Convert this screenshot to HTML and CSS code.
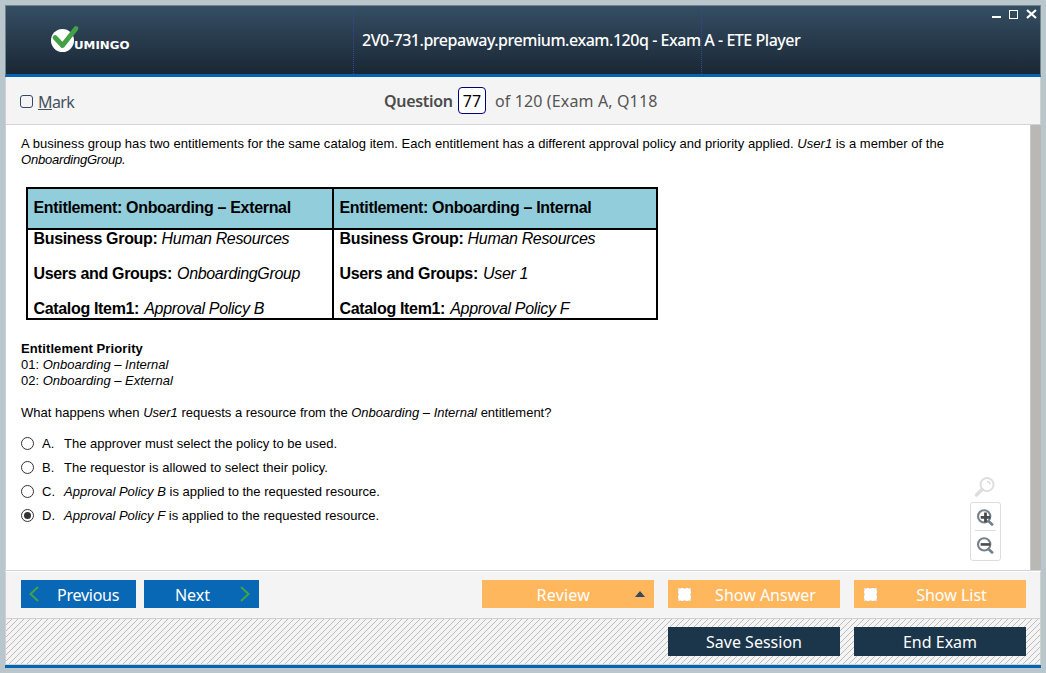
FILE: index.html
```
<!DOCTYPE html>
<html lang="en">
<head>
<meta charset="utf-8">
<title>ETE Player</title>
<link rel="stylesheet" href="styles.css">
</head>
<body>
<div class="window">
  <header class="titlebar">
    <svg class="logo" width="82" height="28" viewBox="0 0 82 28">
      <circle cx="11.500" cy="15.500" r="11.500" fill="#fff"/>
      <path d="M4 12.500L11.500 20.500L25 3.500" fill="none" stroke="#43a047" stroke-width="4.800" stroke-linecap="round" stroke-linejoin="round"/>
      <text class="logo-text" x="23" y="24" textLength="55.500" lengthAdjust="spacingAndGlyphs">UMINGO</text>
    </svg>
    <h1 class="title"><span class="t-title">2V0-731.prepaway.premium.exam.120q - Exam A - ETE Player</span></h1>
    <div class="controls">
      <svg width="46" height="12" viewBox="0 0 46 12" fill="none" stroke="#fff">
        <path d="M0 8H9" stroke-width="2"/>
        <rect x="17.500" y="1.500" width="8" height="8"/>
        <path d="M35 1L44 9M44 1L35 9" stroke-width="2.200"/>
      </svg>
    </div>
  </header>
  <section class="question-bar">
    <label class="mark"><span class="checkbox"></span><span class="t-mark"><u>M</u>ark</span></label>
    <div class="counter"><b class="t-question">Question</b><span class="number">77</span><span class="t-of">of 120 (Exam A, Q118</span></div>
  </section>
  <main class="content">
    <div class="page">
      <p class="intro">A business group has two entitlements for the same catalog item. Each entitlement has a different approval policy and priority applied. <i>User1</i> is a member of the</p>
      <p class="group"><i>OnboardingGroup.</i></p>
      <div class="table">
        <div class="head"><b>Entitlement: Onboarding – External</b></div>
        <div class="head"><b>Entitlement: Onboarding – Internal</b></div>
        <div class="cell">
          <p><b>Business Group:</b> <i>Human Resources</i></p>
          <p><b>Users and Groups:</b> <i>OnboardingGroup</i></p>
          <p><b>Catalog Item1:</b> <i>Approval Policy B</i></p>
        </div>
        <div class="cell">
          <p><b>Business Group:</b> <i>Human Resources</i></p>
          <p><b>Users and Groups:</b> <i>User 1</i></p>
          <p><b>Catalog Item1:</b> <i>Approval Policy F</i></p>
        </div>
      </div>
      <p class="priority"><b>Entitlement Priority</b></p>
      <p>01: <i>Onboarding – Internal</i></p>
      <p>02: <i>Onboarding – External</i></p>
      <p class="ask">What happens when <i>User1</i> requests a resource from the <i>Onboarding – Internal</i> entitlement?</p>
      <ul class="answers">
        <li><span class="radio"></span><span class="letter">A.</span><span>The approver must select the policy to be used.</span></li>
        <li><span class="radio"></span><span class="letter">B.</span><span class="wide">The requestor is allowed to select their policy.</span></li>
        <li><span class="radio"></span><span class="letter">C.</span><span><i>Approval Policy B</i> is applied to the requested resource.</span></li>
        <li><span class="radio checked"></span><span class="letter">D.</span><span><i>Approval Policy F</i> is applied to the requested resource.</span></li>
      </ul>
    </div>
    <div class="zoom-tools">
      <svg width="22" height="22" viewBox="0 0 22 22" fill="none" stroke="#dedede">
        <circle cx="13" cy="8.500" r="6.500" stroke-width="2"/>
        <path d="M8 13.500L2.500 19" stroke-width="3.500" stroke-linecap="round"/>
        <path d="M13 5.500Q16 5.500 16 8.500" stroke-width="1.500"/>
      </svg>
      <div class="zoom-box">
        <svg width="21" height="20" viewBox="0 0 21 20" fill="none" stroke="#74818b">
          <circle cx="9" cy="8.500" r="7" stroke-width="2.400"/>
          <path d="M13.500 13.500L19 18.500" stroke-width="3"/>
          <path d="M5 9.500H16M10.500 4V15" stroke="#4c4c4c" stroke-width="3.200"/>
        </svg>
        <svg class="minus" width="21" height="20" viewBox="0 0 21 20" fill="none" stroke="#74818b">
          <circle cx="9" cy="8.500" r="7" stroke-width="2.400"/>
          <path d="M13.500 13.500L19 18.500" stroke-width="3"/>
          <path d="M5 8.500H16" stroke="#4c4c4c" stroke-width="3"/>
        </svg>
      </div>
    </div>
    <div class="scrollbar"></div>
  </main>
  <nav class="nav-bar">
    <div class="btn blue prev"><svg width="10" height="16" viewBox="0 0 10 16"><path d="M9 1L1.500 8L9 15" fill="none" stroke="#3fa34a" stroke-width="2"/></svg><span class="t-btn">Previous</span></div>
    <div class="btn blue next"><span class="t-btn">Next</span><svg width="10" height="16" viewBox="0 0 10 16"><path d="M1 1L8.500 8L1 15" fill="none" stroke="#3fa34a" stroke-width="2"/></svg></div>
    <div class="btn orange review"><span class="t-btn">Review</span><svg class="arrow" width="10" height="6" viewBox="0 0 10 6"><path d="M0 6L5 0L10 6Z" fill="#34495e"/></svg></div>
    <div class="btn orange show"><span class="box"></span><span class="t-btn">Show Answer</span></div>
    <div class="btn orange show"><span class="box"></span><span class="t-btn">Show List</span></div>
  </nav>
  <footer class="footer">
    <div class="btn dark"><span class="t-btn">Save Session</span></div>
    <div class="btn dark"><span class="t-btn">End Exam</span></div>
  </footer>
</div>
</body>
</html>
```
FILE: styles.css
```
* { box-sizing: border-box; }
body { margin: 0; height: 673px; background: #b9c6cc; padding: 5px; overflow: hidden; font-family: "Liberation Sans", Arial, sans-serif; }
p, h1, ul { margin: 0; padding: 0; }
.window { width: 1036px; height: 663px; display: flex; flex-direction: column; border-bottom: 3px solid #0563b3; }
.titlebar { height: 72px; flex: none; display: grid; grid-template-columns: 347px 349px 1fr; border: 1px solid #71858d; border-bottom: 3px solid #0563b3; background: linear-gradient(#354e63, #1a2735); }
.logo { margin: 19px 0 0 45px; }
.logo-text { font: bold 10.5px "DejaVu Sans", sans-serif; fill: #fff; }
.title { border-left: 1px dotted #33469a; border-right: 1px dotted #33469a; font: 500 16px/69px "Noto Sans", sans-serif; height: 68px; color: #fff; white-space: nowrap; padding-left: 8px; }
.t-title { letter-spacing: -0.46px; }
.controls { display: flex; justify-content: flex-end; padding: 3px 2px 0 0; }
.question-bar { height: 48px; flex: none; display: flex; align-items: center; background: #f4f4f4; border-left: 1px solid #d0d0d0; border-right: 1px solid #d0d0d0; border-bottom: 1px solid #d3d3d3; padding-left: 14px; font: 16px "Noto Sans", sans-serif; color: #44515c; }
.mark { display: flex; align-items: center; gap: 5px; width: 364px; }
.t-mark { letter-spacing: -0.6px; padding-top: 2px; }
.checkbox { width: 13px; height: 13px; border: 1px solid #34495e; border-radius: 3px; margin-top: 1px; }
.counter { display: flex; align-items: center; color: #555; }
.t-question { font-weight: 600; color: #4b4b4b; width: 70px; letter-spacing: -0.3px; }
.t-of { letter-spacing: 0.13px; }
.number { width: 28px; height: 27px; margin: 0 9px 0 4px; border: 1px solid #00007a; border-radius: 4px; background: #fff; color: #000; text-align: center; line-height: 27px; }
.content { height: 446px; flex: none; display: flex; background: #fff; border-left: 1px solid #d0d0d0; border-bottom: 1px solid #d3d3d3; position: relative; }
.page { flex: 1; padding: 11px 0 0 15px; font-size: 13px; line-height: 16px; color: #000; white-space: nowrap; }
.intro { letter-spacing: 0.03px; }
.group { letter-spacing: -0.2px; }
.priority { letter-spacing: 0.1px; }
.wide { letter-spacing: 0.04px; }
.scrollbar { width: 11px; background: #bab8b4; border-left: 1px solid #c8c8c8; }
.table { display: grid; grid-template-columns: 304px 322px; width: 632px; height: 133px; grid-template-rows: 39px 1fr; gap: 2px; border: 2px solid #000; background: #000; margin: 19px 0 21px 5px; font-size: 16px; letter-spacing: -0.33px; }
.head { background: #92cddc; padding-left: 5.5px; line-height: 37px; }
.cell { background: #fff; padding-left: 5.5px; line-height: 35px; overflow: hidden; }
.cell p:first-child { margin-top: -9px; }
.cell p + p i { margin-left: 1px; }
.ask { margin: 16px 0 11px; }
.answers { list-style: none; }
.answers li { height: 24px; display: flex; align-items: center; }
.radio { width: 13px; height: 13px; border: 1px solid #333; border-radius: 50%; margin: 0 8px 2px 0; padding: 2px; }
.checked::before { content: ""; display: block; width: 7px; height: 7px; border-radius: 50%; background: #333; }
.letter { width: 22px; }
.zoom-tools { position: absolute; right: 40px; top: 351px; width: 31px; display: flex; flex-direction: column; align-items: center; }
.zoom-tools > svg { margin-right: 1px; }
.zoom-box { margin-top: 4px; width: 31px; height: 59px; border: 1px solid #ddd; border-radius: 3px; padding: 6px 4px; display: flex; flex-direction: column; }
.minus { border-top: 1px solid #ddd; padding-top: 6px; height: 27px; margin-top: 3px; }
.nav-bar { height: 48px; flex: none; display: flex; gap: 14px; padding: 8px 14px 0 15px; background: #f4f4f4; border: 1px solid #d0d0d0; border-top: 1px solid #fff; }
.btn { width: 172px; height: 28px; font: 16px/28px "Noto Sans", sans-serif; color: #fff; display: flex; justify-content: center; align-items: center; white-space: nowrap; }
.t-btn { padding-top: 2px; }
.blue { width: 115px; background: #0968b5; }
.orange { background: #ffb75e; }
.prev { margin-right: -6px; justify-content: flex-start; padding-left: 8px; gap: 18px; }
.prev .t-btn { letter-spacing: -0.25px; }
.next { justify-content: flex-end; padding-right: 9px; gap: 30px; }
.review { margin-left: auto; justify-content: flex-end; padding-right: 9px; gap: 45px; }
.review .t-btn { letter-spacing: 0.2px; }
.show { justify-content: flex-start; padding-left: 10px; }
.show .t-btn { flex: 1; text-align: center; }
.box { width: 13px; height: 13px; background: #fff; border: 1px dashed #dfe5e5; }
.footer { flex: 1; display: flex; justify-content: flex-end; gap: 14px; padding: 8px 14px 0; border: 1px solid #d0d0d0; border-top: 0; background: #f4f4f4 url("data:image/svg+xml,%3Csvg xmlns='http://www.w3.org/2000/svg' width='6' height='6' shape-rendering='crispEdges'%3E%3Cpath d='M0 5h1v1h-1zM1 4h1v1h-1zM2 3h1v1h-1zM3 2h1v1h-1zM4 1h1v1h-1zM5 0h1v1h-1z' fill='%23bcbcbc'/%3E%3C/svg%3E"); }
.dark { height: 29px; background: #1b354a; }
.dark .t-btn { padding-top: 0; }
```
